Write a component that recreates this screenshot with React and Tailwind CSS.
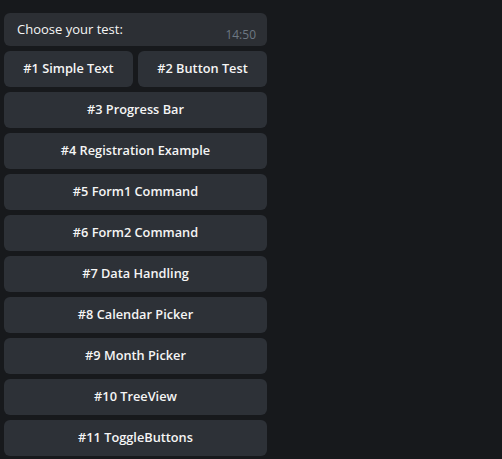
export default function App() {
  const rows = [
    ['#1 Simple Text', '#2 Button Test'],
    ['#3 Progress Bar'],
    ['#4 Registration Example'],
    ['#5 Form1 Command'],
    ['#6 Form2 Command'],
    ['#7 Data Handling'],
    ['#8 Calendar Picker'],
    ['#9 Month Picker'],
    ['#10 TreeView'],
    ['#11 ToggleButtons'],
  ]

  return (
    <div className="w-[502px] h-[459px] overflow-hidden bg-[#17191c] pt-[13px] pl-1 font-['Open_Sans',sans-serif]">
      <div className="w-[263px] flex flex-col gap-[5px]">
        <div className="h-[33px] rounded-md bg-[#2c2f34] flex items-start justify-between pl-[13px] pr-[11px]">
          <span className="text-[13px] text-[#f5f5f5] mt-[7px]">Choose your test:</span>
          <span className="text-[12px] text-[#6d7883] mt-[13px]">14:50</span>
        </div>
        {rows.map((row, i) => (
          <div key={i} className="flex gap-[5px]">
            {row.map(label => (
              <button
                key={label}
                className="flex-1 h-[36px] rounded-md bg-[#2d3137] text-[12.75px] font-semibold text-[#f5f5f5]"
              >
                {label}
              </button>
            ))}
          </div>
        ))}
      </div>
    </div>
  )
}
